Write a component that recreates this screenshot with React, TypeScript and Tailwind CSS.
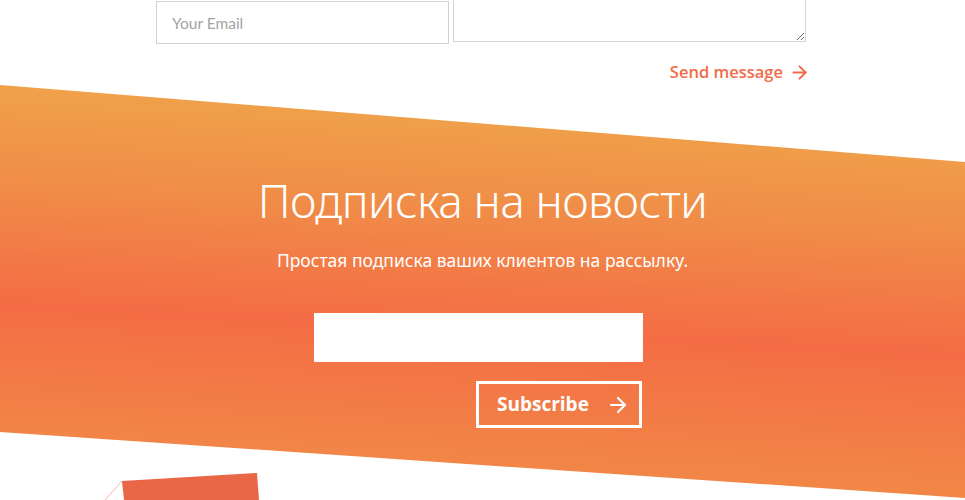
import { ArrowRight } from 'lucide-react';

const sans = { fontFamily: '"Noto Sans", "Open Sans", sans-serif' };

function ContactTail() {
  return (
    <div className="ml-[156px] w-[650px]">
      <div className="flex gap-[4px] pt-[1px]">
        <input
          placeholder="Your Email"
          className="h-[43px] w-[293px] border border-[#d2d2d2] bg-white px-[15px] text-[15.5px] text-[#555] placeholder:text-[#a3a3a3] outline-none font-['Lato',sans-serif]"
        />
        <textarea className="-mt-[39px] h-[80px] w-[353px] border border-[#d5d5d5] bg-white outline-none" />
      </div>
      <div className="mt-[16px] flex justify-end">
        <a className="-mr-[4px] flex items-center gap-[6px] text-[16.5px] leading-[24px] font-semibold text-[#f26a47] font-['Open_Sans',sans-serif]">
          Send message
          <ArrowRight size={21} strokeWidth={2.2} />
        </a>
      </div>
    </div>
  );
}

function Newsletter() {
  return (
    <section className="h-[416px] bg-[linear-gradient(183deg,#efac4a_0%,#f08f48_30%,#f46c45_58%,#f28246_82%,#f0904a_100%)] [clip-path:polygon(0_1px,100%_78px,100%_414px,0_348px)] pt-[93px] text-white">
      <h2 className="text-center text-[46px] leading-none font-light tracking-[-0.6px]" style={sans}>
        Подписка на новости
      </h2>
      <p className="mt-[25px] text-center text-[17.5px] leading-[24px]" style={sans}>
        Простая подписка ваших клиентов на рассылку.
      </p>
      <div className="ml-[314px] mt-[41px] flex w-[329px] flex-col">
        <input className="h-[49px] w-full bg-white px-4 text-[15px] text-[#333] outline-none" />
        <button className="mt-[19px] ml-auto mr-[1px] flex h-[47px] w-[166px] items-center gap-[17px] border-[3px] border-white pl-[18px] text-[19px] font-bold font-['Open_Sans',sans-serif]">
          Subscribe
          <ArrowRight size={24} strokeWidth={2.2} />
        </button>
      </div>
    </section>
  );
}

export default function App() {
  return (
    <div className="relative h-[500px] w-full overflow-hidden bg-white">
      <ContactTail />
      <Newsletter />
      <svg className="absolute left-[100px] top-[465px]" width="170" height="35" viewBox="0 0 170 35">
        <line x1="5" y1="35" x2="22" y2="16" stroke="#f6b4a4" strokeWidth="1" />
        <polygon points="22,16 157,8 159,35 24,35" fill="#e96647" />
      </svg>
    </div>
  );
}
